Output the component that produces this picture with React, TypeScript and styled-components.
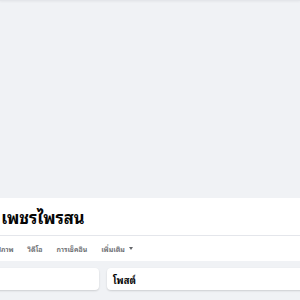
import styled, { createGlobalStyle } from "styled-components";

const Global = createGlobalStyle`
  html, body {
    margin: 0;
    padding: 0;
    background: #f0f2f5;
    font-family: "Noto Sans", "Noto Sans Thai Looped", "Tahoma", "Noto Sans Thai", "Liberation Sans", sans-serif;
  }
`;

const Page = styled.div`
  width: 300px;
  height: 300px;
  overflow: hidden;
  display: flex;
  flex-direction: column;
`;

const TopShade = styled.div`
  height: 1px;
  background: #e4e6ea;
  box-shadow: 0 1px 2px rgba(0, 0, 0, 0.06);
`;

const Cover = styled.div`
  height: 197px;
`;

const ProfileHead = styled.div`
  background: #fff;
  display: flex;
  flex-direction: column;
`;

const NameRow = styled.div`
  height: 37px;
  display: flex;
  align-items: center;
`;

const Name = styled.h1`
  margin: 0 0 0 -37px;
  font-size: 16.5px;
  font-weight: 700;
  color: #050505;
  white-space: nowrap;
`;

const FirstName = styled.span`
  margin-right: -3px;
`;

const Divider = styled.div`
  height: 1px;
  background: #e4e6eb;
`;

const Tabs = styled.div`
  height: 25px;
  display: flex;
  align-items: center;
  gap: 14px;
  margin-left: -7px;
`;

const Tab = styled.span`
  font-size: 7px;
  font-weight: 600;
  color: #65676b;
  white-space: nowrap;
  display: flex;
  align-items: center;
  gap: 4px;
`;

const Caret = styled.span`
  width: 0;
  height: 0;
  border-left: 2.5px solid transparent;
  border-right: 2.5px solid transparent;
  border-top: 3px solid #65676b;
`;

const Content = styled.div`
  display: flex;
  gap: 8px;
  padding-top: 7px;
  margin-left: -200px;
`;

const Card = styled.div<{ $w?: number }>`
  background: #fff;
  border-radius: 4px;
  box-shadow: 0 1px 2px rgba(0, 0, 0, 0.15);
  height: 22px;
  flex: ${(p) => (p.$w ? `0 0 ${p.$w}px` : "1 0 300px")};
  display: flex;
  align-items: center;
  padding: 0 6px;
  box-sizing: border-box;
`;

const CardTitle = styled.span`
  font-size: 9.5px;
  font-weight: 700;
  color: #050505;
`;

export default function App() {
  return (
    <Page>
      <Global />
      <TopShade />
      <Cover />
      <ProfileHead>
        <NameRow>
          <Name>
            <FirstName>ธีรวิน</FirstName> เพชรไพรสน
          </Name>
        </NameRow>
        <Divider />
        <Tabs>
          <Tab>รูปภาพ</Tab>
          <Tab>วิดีโอ</Tab>
          <Tab>การเช็คอิน</Tab>
          <Tab>
            เพิ่มเติม <Caret />
          </Tab>
        </Tabs>
      </ProfileHead>
      <Content>
        <Card $w={299} />
        <Card>
          <CardTitle>โพสต์</CardTitle>
        </Card>
      </Content>
    </Page>
  );
}
